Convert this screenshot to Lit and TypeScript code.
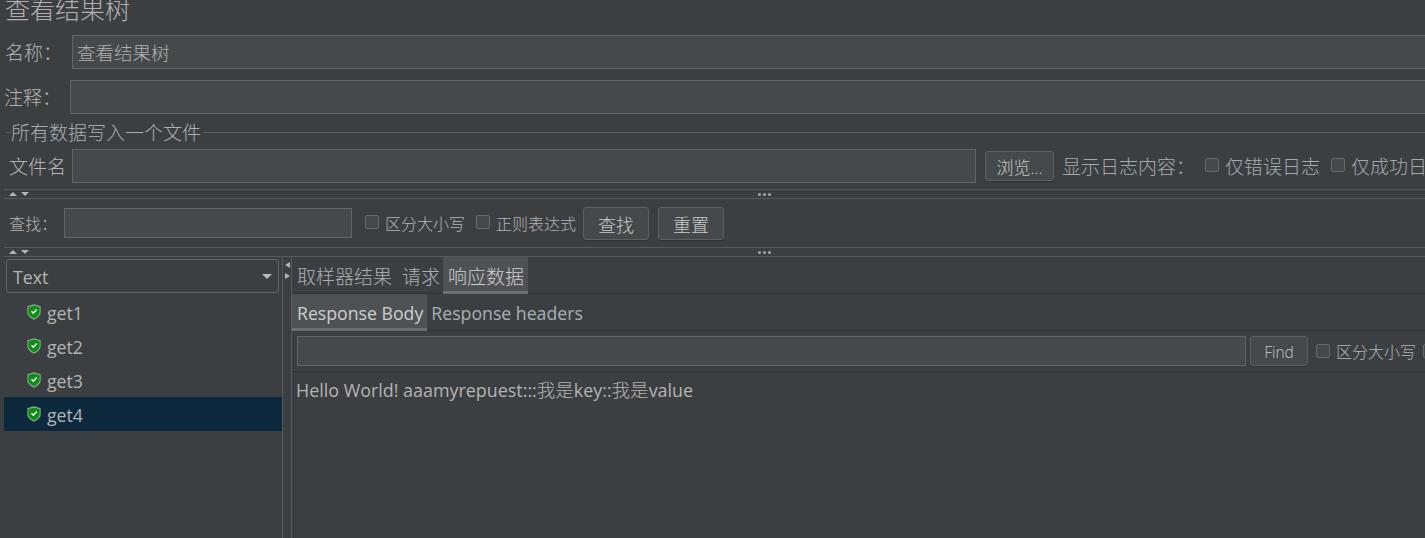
import { LitElement, html, css } from "lit";
import { customElement } from "lit/decorators.js";

const shield = html`<svg class="shield" width="14" height="16" viewBox="0 0 14 16">
  <path d="M7 .3 L13.700 2.300 V8 C13.700 11.500 10.500 14.200 7 15.700 C3.500 14.200 .3 11.500 .3 8 V2.300 Z" fill="#a9b2a9" stroke="#5f675f" stroke-width=".5"/>
  <path d="M7 1.400 L12.700 3 V8 C12.700 10.900 9.900 13.200 7 14.500 C4.100 13.200 1.300 10.900 1.300 8 V3 Z" fill="#0a8f14"/>
  <path d="M4.500 7.300 L6.300 9.200 L9.700 5.600" fill="none" stroke="#fff" stroke-width="1.400"/>
</svg>`;

@customElement("app-root")
export class AppRoot extends LitElement {
  static styles = css`
    :host { display: block; width: 1425px; height: 538px; overflow: hidden; background: #3c3f41; color: #b4b4b4;
      font-family: "Open Sans", "Noto Sans CJK SC", sans-serif; font-size: 17.7px; font-weight: 300; }
    .title { height: 22px; line-height: 18px; font-size: 25px; padding-left: 5px; white-space: nowrap; margin-bottom: 13px; color: #b0b0b0; }
    .row { display: flex; align-items: center; white-space: nowrap; }
    .field { box-sizing: border-box; background: #45494a; border: 1px solid #646464; color: #b0b0b0; flex: none; }
    .name { height: 34px; padding-left: 5px; margin-bottom: 11px; font-size: 19px; }
    .name .label { width: 67px; flex: none; box-sizing: border-box; }
    .name .field { width: 1400px; height: 34px; line-height: 34px; padding-left: 4px; font-size: 18.500px; }
    .name.c { padding-left: 4px; margin-bottom: 0; }
    .name.c .label { width: 66px; }
    .legend { margin: 5px 0 4px 6px; height: 26px; display: flex; align-items: center; font-size: 19px; white-space: nowrap; color: #a9b0b5; }
    .legend::before { content: ""; width: 5px; flex: none; border-top: 1px solid #5a5d5f; }
    .legend::after { content: ""; flex: 1; margin-left: 2px; border-top: 1px solid #5a5d5f; }
    .file { height: 34px; padding-left: 9px; font-size: 19px; }
    .file .label { width: 63px; flex: none; }
    .file .field { width: 904px; height: 34px; }
    .btn { box-sizing: border-box; flex: none; display: flex; align-items: center; justify-content: center; background: #45494b;
      border: 1px solid #5e6060; border-radius: 3px; color: #c8c8c8; box-shadow: 0 1px 1px #2f3133; }
    .browse { width: 69px; height: 30px; margin: 0 8px 0 9px; font-size: 17px; }
    .gray { color: #a3abb1; }
    .box { box-sizing: border-box; width: 14px; height: 14px; flex: none; border: 1px solid #676a6c; border-radius: 2px; background: #43494a; }
    .logs .first { margin: -2px 6px 0 10px; }
    .logs .second { margin: -2px 6px 0 11px; }
    .splitter { box-sizing: border-box; height: 10px; margin-left: 4px; padding-left: 754px; border-top: 1px solid #565859; border-bottom: 1px solid #565859; position: relative; display: flex; align-items: center; gap: 2px; }
    .dot { width: 3px; height: 3px; background: #a3a5a6; border-radius: 50%; }
    .mini { position: absolute; left: 5px; top: 2px; display: flex; gap: 4px; }
    .up, .down { width: 0; height: 0; border-left: 4px solid transparent; border-right: 4px solid transparent; }
    .up { border-bottom: 4px solid #b2b4b5; }
    .down { border-top: 4px solid #b2b4b5; }
    .s1 { margin-top: 6px; }
    .find { height: 48px; padding-left: 9px; font-size: 16px; }
    .find .label { width: 55px; flex: none; }
    .find .field { width: 288px; height: 30px; margin-right: 13px; }
    .chk { margin: -2px 6px 0 0; }
    .find .t { margin-right: 11px; }
    .find .t2 { margin-right: 7px; }
    .find .btn { width: 66px; height: 33px; font-size: 18px; margin: 1px 9px 0 0; }
    .main { display: flex; height: 282px; font-weight: 400; }
    .left { width: 278px; margin-left: 4px; flex: none; box-sizing: border-box; padding-top: 2px; }
    .combo { box-sizing: border-box; margin-left: 2px; width: 273px; height: 34px; border: 1px solid #646464; border-radius: 3px; display: flex; align-items: center; justify-content: space-between; padding: 1px 6px 0 6px; margin-bottom: 2px; }
    .caret { width: 0; height: 0; border-left: 5px solid transparent; border-right: 5px solid transparent; border-top: 5px solid #bbb; margin-top: -1px; }
    .node { height: 34px; display: flex; align-items: center; padding-left: 23px; gap: 6px; }
    .node span { margin-top: 2px; }
    .node.sel { background: #0d293e; }
    .shield { flex: none; }
    .rail { box-sizing: border-box; width: 10px; flex: none; border-left: 1px solid #565859; border-right: 1px solid #565859; padding: 5px 0 0 2px; display: flex; flex-direction: column; gap: 5px; }
    .lt, .rt { width: 0; height: 0; border-top: 3.500px solid transparent; border-bottom: 3.500px solid transparent; }
    .lt { border-right: 5px solid #b2b4b5; }
    .rt { border-left: 5px solid #b2b4b5; }
    .right { flex: 1; min-width: 0; }
    .tabs { box-sizing: border-box; height: 37px; display: flex; border-bottom: 1px solid #323232; }
    .tab { box-sizing: border-box; height: 37px; display: flex; align-items: center; white-space: nowrap; color: #a9b0b5; }
    .tab.on { background: #4e5254; border-bottom: 3px solid #6a7076; padding-top: 3px; color: #cfcfcf; }
    .t-a { font-size: 19px; padding: 0 5px; font-weight: 300; }
    .t-b { font-size: 19px; padding: 0 3px 0 5px; font-weight: 300; }
    .t-c { font-size: 19px; padding: 0 4px 0 5px; font-weight: 300; }
    .t-d { padding: 0 4px 0 5px; }
    .t-e { padding: 0 5px 0 4px; }
    .search { box-sizing: border-box; height: 41px; border-bottom: 1px solid #323232; padding: 0 0 0 5px; display: flex; align-items: center; white-space: nowrap; }
    .search .field { width: 949px; height: 30px; margin-right: 4px; }
    .search .btn { width: 58px; height: 30px; font-size: 15.500px; margin-right: 8px; padding-top: 1px; font-weight: 300; }
    .search .box { margin-right: 6px; }
    .search .t { font-size: 16px; margin-right: 7px; font-weight: 300; }
    .body { padding: 6px 0 0 4px; white-space: nowrap; line-height: 24px; font-size: 17.9px; }
    .zh { font-size: 18.500px; font-weight: 300; }
  `;

  render() {
    const mini = html`<div class="mini"><div class="up"></div><div class="down"></div></div>
      <div class="dot"></div><div class="dot"></div><div class="dot"></div>`;
    return html`
      <div class="title">查看结果树</div>
      <div class="row name"><div class="label">名称：</div><div class="field">查看结果树</div></div>
      <div class="row name c"><div class="label">注释：</div><div class="field"></div></div>
      <div class="legend"><span>所有数据写入一个文件</span></div>
      <div class="row file logs">
        <div class="label">文件名</div><div class="field"></div>
        <div class="btn browse">浏览...</div>
        <span class="gray">显示日志内容：</span>
        <div class="box first"></div><span class="gray">仅错误日志</span>
        <div class="box second"></div><span class="gray">仅成功日志</span>
      </div>
      <div class="splitter s1">${mini}</div>
      <div class="row find">
        <div class="label">查找：</div><div class="field"></div>
        <div class="box chk"></div><span class="t">区分大小写</span>
        <div class="box chk"></div><span class="t2">正则表达式</span>
        <div class="btn">查找</div><div class="btn">重置</div>
      </div>
      <div class="splitter">${mini}</div>
      <div class="main">
        <div class="left">
          <div class="combo"><span>Text</span><div class="caret"></div></div>
          <div class="node">${shield}<span>get1</span></div>
          <div class="node">${shield}<span>get2</span></div>
          <div class="node">${shield}<span>get3</span></div>
          <div class="node sel">${shield}<span>get4</span></div>
        </div>
        <div class="rail"><div class="lt"></div><div class="rt"></div></div>
        <div class="right">
          <div class="tabs">
            <div class="tab t-a">取样器结果</div><div class="tab t-b">请求</div><div class="tab on t-c">响应数据</div>
          </div>
          <div class="tabs">
            <div class="tab on t-d">Response Body</div><div class="tab t-e">Response headers</div>
          </div>
          <div class="search">
            <div class="field"></div><div class="btn">Find</div>
            <div class="box"></div><span class="t">区分大小写</span><div class="box"></div>
          </div>
          <div class="body">Hello World! aaamyrepuest:::<span class="zh">我是</span>key::<span class="zh">我是</span>value</div>
        </div>
      </div>
    `;
  }
}
